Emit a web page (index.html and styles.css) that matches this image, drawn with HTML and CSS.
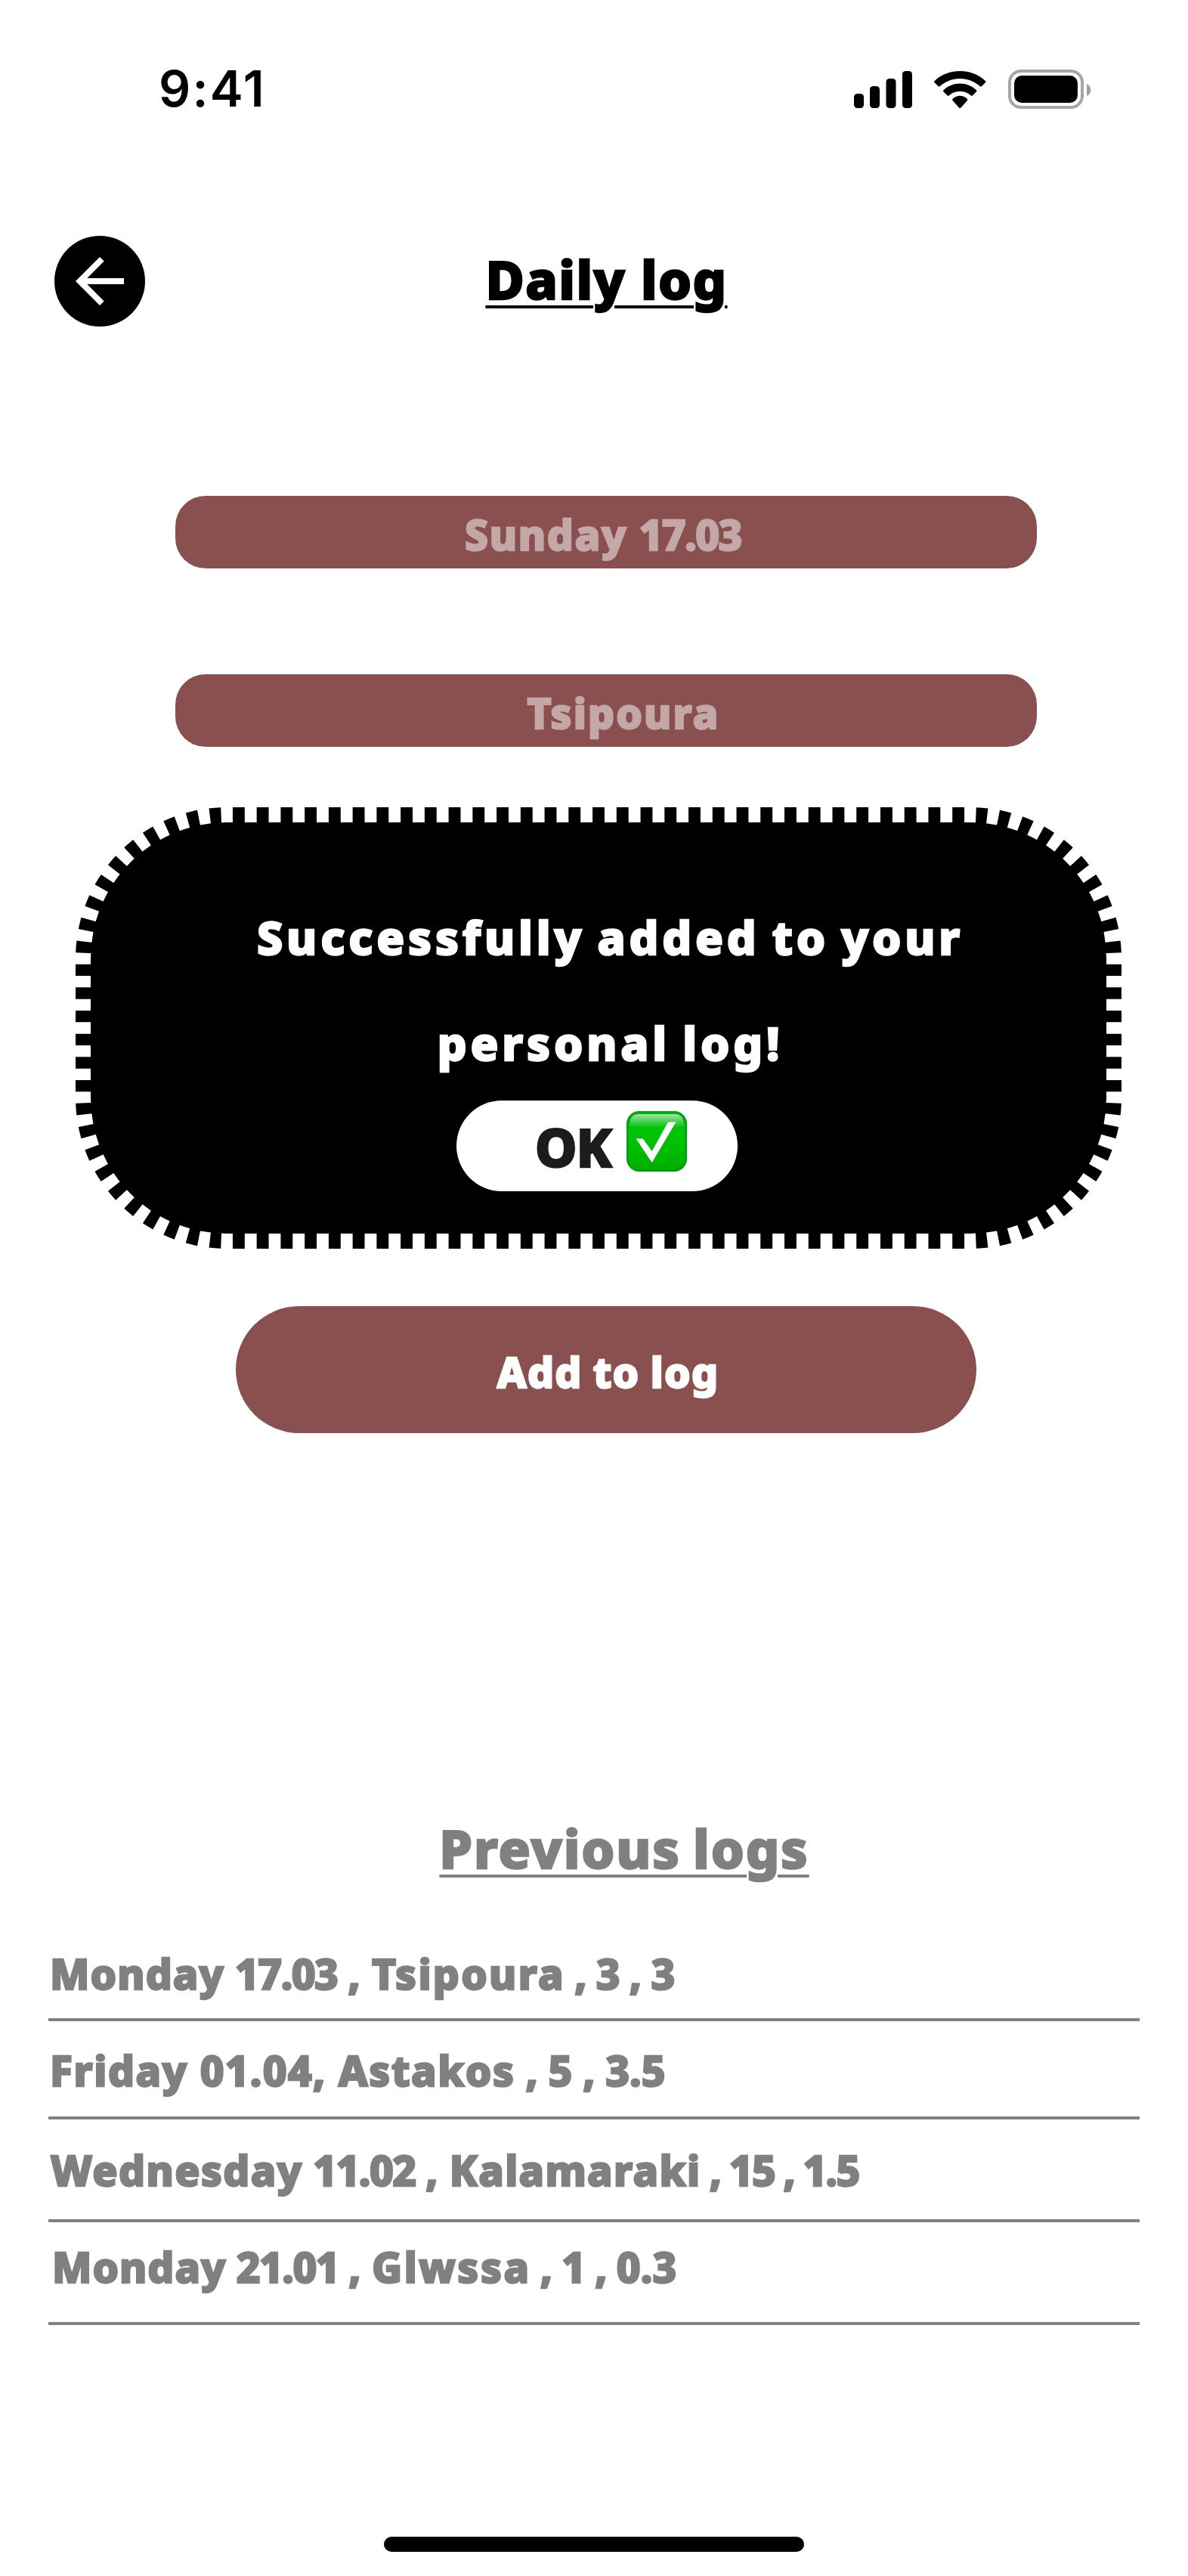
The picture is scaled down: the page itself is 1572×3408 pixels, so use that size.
FILE: index.html
```html
<!DOCTYPE html>
<html lang="en">
<head>
<meta charset="utf-8">
<title>Daily log</title>
<link rel="stylesheet" href="styles.css">
</head>
<body>
<main class="screen">
  <div class="status">
    <span class="time">9:41</span>
    <div class="indicators">
      <svg class="signal" viewBox="0 0 77 52"><rect x="0" y="32" width="13" height="19" rx="4.5"/><rect x="21" y="22" width="13" height="29" rx="4.5"/><rect x="42.5" y="12" width="13" height="39" rx="4.5"/><rect x="64" y="2" width="13" height="49" rx="4.5"/></svg>
      <svg class="wifi" viewBox="0 -0.5 17.143 13"><path d="M8.5713 2.46628C11.0584 2.46639 13.4504 3.38847 15.2529 5.04195C15.3887 5.16963 15.6056 5.16802 15.7393 5.03834L17.0368 3.77487C17.1045 3.70911 17.1422 3.62004 17.1417 3.52735C17.1411 3.43467 17.1023 3.34603 17.0338 3.28104C12.3028 -1.09368 4.83907 -1.09368 0.108056 3.28104C0.0395 3.34598 0.0006 3.4346 0 3.52728C-0.0006 3.61996 0.037 3.70906 0.104689 3.77487L1.40255 5.03834C1.53615 5.16822 1.75327 5.16983 1.88893 5.04195C3.69167 3.38836 6.08395 2.46628 8.5713 2.46628ZM8.56795 6.68656C9.92527 6.68647 11.2341 7.19821 12.2403 8.12234C12.3763 8.25347 12.5907 8.25063 12.7234 8.11594L14.0106 6.79684C14.0784 6.72775 14.116 6.63405 14.1151 6.5367C14.1141 6.43934 14.0746 6.34648 14.0055 6.27869C10.9417 3.38904 6.19678 3.38904 3.13299 6.27869C3.06384 6.34648 3.02435 6.43938 3.02345 6.53676C3.02254 6.63415 3.06029 6.72781 3.12827 6.79684L4.41504 8.11594C4.54768 8.25063 4.76207 8.25347 4.89816 8.12234C5.90368 7.19882 7.21152 6.68713 8.56795 6.68656ZM11.0924 9.48011C11.0943 9.58546 11.0572 9.68703 10.9899 9.76084L8.81327 12.2156C8.74946 12.2877 8.66247 12.3283 8.5717 12.3283C8.48093 12.3283 8.39394 12.2877 8.33013 12.2156L6.15314 9.76084C6.08585 9.68697 6.04886 9.58537 6.05088 9.48001C6.0529 9.37466 6.09377 9.27498 6.16382 9.20448C7.55375 7.89297 9.58965 7.89297 10.9796 9.20448C11.0496 9.27504 11.0904 9.37475 11.0924 9.48011Z"/></svg>
      <svg class="battery" viewBox="0 0 110 52"><rect x="2" y="2" width="96" height="48" rx="15" fill="none" stroke="#a6a6a6" stroke-width="4"/><rect x="8" y="8" width="84" height="36" rx="10"/><path d="M104 19C107.3 20.400 109.300 23.500 109.300 27S107.300 33.600 104 35Z" fill="#a0a0a0"/></svg>
    </div>
  </div>

  <header class="header">
    <a class="back" aria-label="Back"><svg viewBox="0 0 64 64"><path fill="#fff" d="M64 28H15.300L37.700 5.600 32 0 0 32 32 64 37.700 58.400 15.300 36H64Z"/></svg></a>
    <h1 class="title">Daily log</h1>
  </header>

  <div class="field field-date">Sunday <span class="date">17.03</span></div>
  <div class="field field-name">Tsipoura</div>

  <section class="modal">
    <svg class="stitches" viewBox="0 0 1384 584">
      <g fill="none" stroke="#000" stroke-width="24" stroke-dasharray="0 1 2 1">
        <path pathLength="124" d="M200 12H1184"/>
        <path pathLength="40" d="M1184 12A188 188 0 0 1 1372 200"/>
        <path pathLength="24" d="M1372 200V384"/>
        <path pathLength="40" d="M1372 384A188 188 0 0 1 1184 572"/>
        <path pathLength="124" d="M1184 572H200"/>
        <path pathLength="40" d="M200 572A188 188 0 0 1 12 384"/>
        <path pathLength="24" d="M12 384V200"/>
        <path pathLength="40" d="M12 200A188 188 0 0 1 200 12"/>
      </g>
      <rect x="20" y="20" width="1344" height="544" rx="180"/>
    </svg>
    <p class="message">Successfully added to your<br>personal log!</p>
    <button class="ok"><span>OK</span>
      <svg class="check" viewBox="0 0 80 80">
        <defs>
          <linearGradient id="face" x1="0" y1="0" x2="0" y2="1"><stop offset="0" stop-color="#00b712"/><stop offset=".35" stop-color="#00c505"/><stop offset=".65" stop-color="#00bd00"/><stop offset="1" stop-color="#00ab00"/></linearGradient>
          <linearGradient id="shine" x1="0" y1="0" x2="0" y2="1"><stop offset="0" stop-color="#fff" stop-opacity=".62"/><stop offset="1" stop-color="#fff" stop-opacity="0"/></linearGradient>
        </defs>
        <rect width="80" height="80" rx="17" fill="url(#face)"/>
        <rect x="1.200" y="1.200" width="77.600" height="77.600" rx="16" fill="none" stroke="#009a14" stroke-width="2.400" opacity=".75"/>
        <path d="M4.500 22V17Q4.500 4 17 4H63Q75.500 4 75.500 17V22Z" fill="url(#shine)"/>
        <path d="M12.300 36.300H21.700L33.700 52.700 55 14.300H65.700L33.700 68.300Z" fill="#fff" stroke="#087a08" stroke-opacity=".35" stroke-width=".6"/>
      </svg>
    </button>
  </section>

  <button class="add">Add to log</button>

  <h2 class="previous">Previous logs</h2>
  <ul class="logs">
    <li class="log log-1">Monday <span class="date">17.03</span> , <span class="name">Tsipoura</span><span class="tail"> , 3 , 3</span></li>
    <li class="log log-2">Friday <span class="date">01.04</span>, Astakos<span class="tail"> , 5 , 3.5</span></li>
    <li class="log log-3">Wednesday <span class="date">11.02</span> , Kalamaraki<span class="tail"> , 15 , 1.5</span></li>
    <li class="log log-4">Monday <span class="date">21.01</span> , <span class="name">Glwssa</span><span class="tail"> , 1 , 0.3</span></li>
  </ul>
  <div class="home"></div>
</main>
</body>
</html>
```
FILE: styles.css
```css
* { box-sizing: border-box; }
body { margin: 0; background: #fff; }
.screen {
  width: 1572px;
  height: 3408px;
  display: flex;
  flex-direction: column;
  align-items: center;
  color: #000;
  font-family: "Noto Sans", "Open Sans", sans-serif;
  font-weight: 800;
  font-size: 55px;
  -webkit-text-stroke: 2.4px currentColor;
  stroke-linejoin: round;
}
svg { display: block; }
button {
  border: 0;
  padding: 0;
  font: inherit;
  color: inherit;
  -webkit-text-stroke: inherit;
}

/* Status bar */
.status {
  width: 100%;
  height: 312px;
  padding: 92px 128px 0 210px;
  display: flex;
  justify-content: space-between;
  align-items: flex-start;
  -webkit-text-stroke: 0;
}
.time {
  margin-top: -1px;
  font: 600 66px/52px Inter, sans-serif;
  letter-spacing: 2.2px;
}
.indicators { display: flex; }
.signal { width: 77px; height: 52px; }
.wifi { width: 68.500px; height: 52px; margin: 0 29.500px 0 29px; }
.battery { width: 110px; height: 52px; }

/* Header */
.header {
  width: 100%;
  height: 120px;
  padding: 0 72px;
  display: grid;
  grid-template-columns: 120px 1fr 120px;
}
.back {
  width: 120px;
  height: 120px;
  border-radius: 50%;
  background: #000;
  display: grid;
  place-items: center;
}
.back svg { width: 64px; height: 64px; }
.title, .previous {
  margin: 0;
  font-size: 70px;
  font-weight: 800;
  text-align: center;
  text-decoration: underline;
  text-decoration-thickness: 4px;
  text-underline-offset: 8px;
}
.title {
  line-height: 115px;
  padding-left: 33px;
  letter-spacing: 1.450px;
}

/* Form */
.field {
  width: 1140px;
  height: 96px;
  margin: 140px 0 0 32px;
  padding-top: 6px;
  border-radius: 40px;
  background: #8a4f4f;
  color: #c4a7a7;
  line-height: 90px;
  text-align: center;
}
.field-date {
  margin-top: 224px;
  padding-right: 8px;
  letter-spacing: 1.770px;
  word-spacing: -.7px;
}
.field-name { padding-left: 46px; letter-spacing: 2.190px; }
.date { letter-spacing: -1.500px; }

/* Confirmation */
.modal {
  position: relative;
  width: 1384px;
  height: 584px;
  margin: 80px 0 0 12px;
  padding-top: 102px;
  display: flex;
  flex-direction: column;
  align-items: center;
  color: #fff;
}
.stitches { position: absolute; inset: 0; width: 1384px; height: 584px; }
.message {
  position: relative;
  margin: 0;
  padding-left: 31px;
  font-size: 61px;
  line-height: 140px;
  letter-spacing: 4.850px;
  word-spacing: -4.500px;
  text-align: center;
}
.ok {
  position: relative;
  width: 372px;
  height: 120px;
  margin: 6px 4px 0 0;
  padding-left: 104px;
  border-radius: 60px;
  background: #fff;
  color: #1c1c1c;
  display: flex;
  font-size: 70px;
  line-height: 122px;
  letter-spacing: -1px;
}
.ok span { width: 121px; text-align: left; }
.check { width: 80px; height: 80px; margin-top: 14px; }
.add {
  width: 980px;
  height: 168px;
  margin: 76px 0 0 32px;
  padding: 5px 0 0 5px;
  border-radius: 84px;
  background: #8a4f4f;
  color: #fff;
  letter-spacing: 1.260px;
  word-spacing: -1.350px;
}

/* History */
.previous {
  margin-top: 499px;
  padding-left: 80px;
  line-height: 100px;
  letter-spacing: 1.900px;
  word-spacing: -3.900px;
  color: #808080;
}
.logs {
  width: 1444px;
  margin: 76px 0 0;
  padding: 0;
  list-style: none;
  color: #808080;
}
.log {
  border-bottom: 4px solid #808080;
  line-height: 80px;
  white-space: nowrap;
}
.log-1 { height: 103px; padding-left: 2px; letter-spacing: 1.100px; word-spacing: -1.300px; }
.log-2 { height: 130px; padding: 25px 0 0 2px; letter-spacing: 1.600px; }
.log-3 { height: 136px; padding: 27px 0 0 3px; letter-spacing: 1.400px; word-spacing: -2px; }
.log-4 { height: 136px; padding: 19px 0 0 5px; letter-spacing: 1px; word-spacing: -2px; }
.name { letter-spacing: 2.300px; }
.tail { letter-spacing: 0; word-spacing: -2px; }
.log-2 .date { letter-spacing: 1.300px; }
.log-2 .tail { letter-spacing: 0; word-spacing: -.5px; }
.log-3 .tail { letter-spacing: -1.700px; word-spacing: -1.200px; }
.log-4 .name { letter-spacing: 2.600px; }
.log-4 .tail { letter-spacing: .2px; word-spacing: -2.500px; }

.home {
  width: 556px;
  height: 20px;
  margin-top: 280px;
  border-radius: 10px;
  background: #000;
}
```
